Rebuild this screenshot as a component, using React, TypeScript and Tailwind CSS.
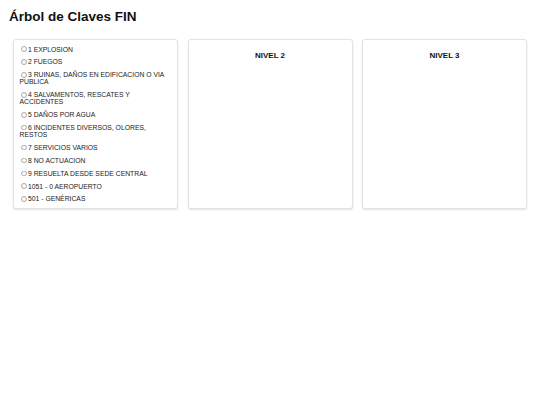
const claves = [
  "1 EXPLOSION",
  "2 FUEGOS",
  "3 RUINAS, DAÑOS EN EDIFICACION O VIA PUBLICA",
  "4 SALVAMENTOS, RESCATES Y ACCIDENTES",
  "5 DAÑOS POR AGUA",
  "6 INCIDENTES DIVERSOS, OLORES, RESTOS",
  "7 SERVICIOS VARIOS",
  "8 NO ACTUACION",
  "9 RESUELTA DESDE SEDE CENTRAL",
  "1051 - 0 AEROPUERTO",
  "501 - GENÉRICAS",
];

function Card({ children }: { children?: React.ReactNode }) {
  return (
    <div className="flex-1 min-w-0 bg-white border border-[#e3e3e3] rounded-[3px] shadow-[0_1px_2px_rgba(0,0,0,0.12)]">
      {children}
    </div>
  );
}

export default function App() {
  return (
    <div
      className="min-h-screen bg-white px-[9px] pt-[8px] text-[#111]"
      style={{ fontFamily: '"Liberation Sans", Arial, sans-serif' }}
    >
      <h1 className="text-[13.5px] font-bold leading-[18px]">Árbol de Claves FIN</h1>

      <div className="mt-[13px] flex gap-[9.5px] px-[4px]">
        {/* Nivel 1 */}
        <Card>
          <div className="flex flex-col gap-[5.9px] pl-[5.5px] pr-[5px] pt-[5.5px] pb-[5.5px]">
            {claves.map((c) => (
              <label key={c} className="block text-[6.8px] leading-[7px] text-[#1a1a1a]">
                <span className="inline-block w-[5.5px] h-[5.5px] rounded-full border border-[#a8a8a8] align-middle ml-[1.5px] mr-[1.5px] -mt-[1px]" />
                {c}
              </label>
            ))}
          </div>
        </Card>

        {/* Nivel 2 */}
        <Card>
          <div className="pt-[11px] text-center text-[8px] leading-[9px] font-bold">NIVEL 2</div>
        </Card>

        {/* Nivel 3 */}
        <Card>
          <div className="pt-[11px] text-center text-[8px] leading-[9px] font-bold">NIVEL 3</div>
        </Card>
      </div>
    </div>
  );
}
